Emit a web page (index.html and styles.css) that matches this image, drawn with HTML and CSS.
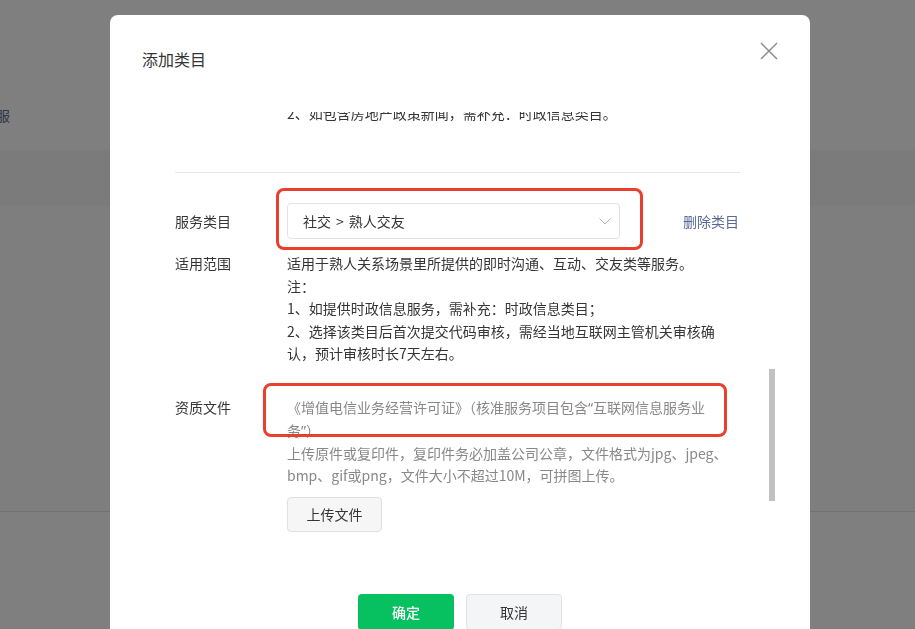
FILE: index.html
```html
<!DOCTYPE html>
<html lang="zh-CN">
<head>
<meta charset="utf-8">
<title>添加类目</title>
<link rel="stylesheet" href="styles.css">
</head>
<body>
<div class="page">
  <div class="page-head"><span class="page-nav">客服</span></div>
  <div class="page-table">
    <div class="table-head"></div>
    <div class="table-row"></div>
  </div>
</div>

<div class="mask">
  <div class="dialog">
    <div class="dialog-hd">
      <h3 class="dialog-title">添加类目</h3>
      <button class="dialog-close" aria-label="关闭">
        <svg width="18" height="18" viewBox="0 0 18 18"><path d="M1 1L17 17M17 1L1 17" stroke="#8a8a8a" stroke-width="1.4" fill="none"/></svg>
      </button>
    </div>
    <div class="dialog-bd">
      <div class="scroll-inner">
        <div class="cat-block cat-prev">
          <div class="form-row">
            <div class="label"></div>
            <div class="ctrl">2、如包含房地产政策新闻，需补充：时政信息类目。</div>
          </div>
        </div>
        <div class="cat-block">
          <div class="form-row row-select">
            <div class="label">服务类目</div>
            <div class="ctrl ctrl-select">
              <div class="select-wrap">
                <div class="select">
                  <span>社交<span class="sep">&gt;</span>熟人交友</span>
                  <svg width="12" height="7" viewBox="0 0 12 7"><path d="M0.5 0.5L6 6L11.5 0.5" stroke="#b2b2b2" stroke-width="1" fill="none"/></svg>
                </div>
                <span class="mark mark-select"></span>
              </div>
              <a class="link-del" href="#">删除类目</a>
            </div>
          </div>
          <div class="form-row row-scope">
            <div class="label">适用范围</div>
            <div class="ctrl">适用于熟人关系场景里所提供的即时沟通、互动、交友类等服务。<br>注：<br>1、如提供时政信息服务，需补充：时政信息类目；<br>2、选择该类目后首次提交代码审核，需经当地互联网主管机关审核确<br>认，预计审核时长7天左右。</div>
          </div>
          <div class="form-row row-qual">
            <div class="label">资质文件</div>
            <div class="ctrl">
              <div class="qual-text">《增值电信业务经营许可证》（核准服务项目包含<span class="q">“</span>互联网信息服务业<br>务<span class="q">”</span>）<span class="mark mark-qual"></span></div>
              <div class="tips">上传原件或复印件，复印件务必加盖公司公章，文件格式为jpg、jpeg、<br>bmp、gif或png，文件大小不超过10M，可拼图上传。</div>
              <button class="btn-upload">上传文件</button>
            </div>
          </div>
        </div>
      </div>
      <div class="scroll-thumb"></div>
    </div>
    <div class="dialog-ft">
      <button class="btn btn-primary">确定</button>
      <button class="btn btn-default">取消</button>
    </div>
  </div>
</div>
</body>
</html>
```

FILE: styles.css
```css
html, body {
  margin: 0;
  padding: 0;
}
body {
  font-family: "Noto Sans CJK SC", "Noto Sans", sans-serif;
  font-size: 14px;
  color: #353535;
  background: #fff;
  overflow: hidden;
}

/* background page */
.page {
  height: 629px;
  overflow: hidden;
}
.page-head {
  height: 150px;
  box-sizing: border-box;
  padding-top: 104px;
}
.page-nav {
  display: inline-block;
  margin-left: -18px;
  line-height: 22px;
  color: #576b95;
}
.table-head {
  height: 56px;
  background: #f7f7f7;
}
.table-row {
  height: 305px;
  background: #fdfdfd;
  border-bottom: 1px solid #e4e4e4;
}

/* mask + dialog */
.mask {
  position: fixed;
  inset: 0;
  background: rgba(0, 0, 0, 0.5);
  display: flex;
  justify-content: center;
  align-items: flex-start;
  padding: 15px 0 0 5px;
  box-sizing: border-box;
}
.dialog {
  width: 700px;
  height: 660px;
  flex: none;
  background: #fff;
  border-radius: 8px;
  display: flex;
  flex-direction: column;
}
.dialog-hd {
  height: 97px;
  box-sizing: border-box;
  padding: 32px 32px 0;
  display: flex;
  justify-content: space-between;
  align-items: flex-start;
  flex: none;
}
.dialog-title {
  margin: 0;
  font-size: 16px;
  font-weight: normal;
  line-height: 24px;
  color: #353535;
}
.dialog-close {
  width: 18px;
  height: 18px;
  margin-top: -5px;
  padding: 0;
  border: 0;
  background: none;
  display: block;
}
.dialog-close svg {
  display: block;
}

.dialog-bd {
  position: relative;
  height: 458px;
  flex: none;
  overflow: hidden;
  padding: 0 70px 0 65px;
}
.scroll-inner {
  margin-top: -10px;
}
.form-row {
  display: flex;
}
.label {
  width: 112px;
  flex: none;
  color: #353535;
}
.ctrl {
  flex: 1;
  min-width: 0;
}

.cat-prev {
  line-height: 22px;
  padding-bottom: 48px;
  border-bottom: 1px solid #e7e7e7;
}

.row-select {
  margin-top: 30px;
}
.row-select .label {
  line-height: 36px;
}
.ctrl-select {
  display: flex;
  align-items: center;
  justify-content: space-between;
}
.select-wrap {
  position: relative;
}
.select {
  width: 333px;
  height: 36px;
  box-sizing: border-box;
  border: 1px solid #e2e2e2;
  border-radius: 4px;
  padding: 0 8px 0 15px;
  display: flex;
  align-items: center;
  justify-content: space-between;
  line-height: 34px;
  color: #353535;
}
.sep {
  margin: 0 5px;
}
.select svg {
  display: block;
}
.link-del {
  color: #576b95;
  text-decoration: none;
  line-height: 36px;
  margin-right: 1px;
}

.row-scope {
  margin-top: 13px;
  line-height: 22.5px;
}

.row-qual {
  margin-top: 31px;
  line-height: 22px;
}
.qual-text {
  position: relative;
  color: #888;
}
.q {
  font-family: "Noto Sans", sans-serif;
}
.tips {
  color: #888;
}
.btn-upload {
  display: block;
  margin-top: 11px;
  width: 95px;
  height: 35px;
  padding: 0;
  border: 1px solid #e0e0e0;
  border-radius: 4px;
  background: #f6f6f7;
  font-family: inherit;
  font-size: 14px;
  color: #353535;
}

.mark {
  position: absolute;
  box-sizing: border-box;
  border: 3px solid #e8402d;
  border-radius: 8px;
  pointer-events: none;
}
.mark-select {
  left: -11px;
  top: -15px;
  width: 367px;
  height: 62px;
}
.mark-qual {
  left: -24px;
  top: -13px;
  width: 464px;
  height: 54px;
}

.scroll-thumb {
  position: absolute;
  right: 35px;
  top: 257px;
  width: 6px;
  height: 132px;
  background: #c1c1c1;
}

.dialog-ft {
  display: flex;
  justify-content: center;
  gap: 12px;
  padding-top: 24px;
}
.btn {
  width: 96px;
  height: 36px;
  padding: 0;
  border-radius: 4px;
  font-family: inherit;
  font-size: 14px;
  box-sizing: border-box;
}
.btn-primary {
  background: #07c160;
  border: 0;
  color: #fff;
  font-weight: 500;
}
.btn-default {
  background: #f4f5f7;
  border: 1px solid #e1e2e5;
  color: #353535;
}
```
